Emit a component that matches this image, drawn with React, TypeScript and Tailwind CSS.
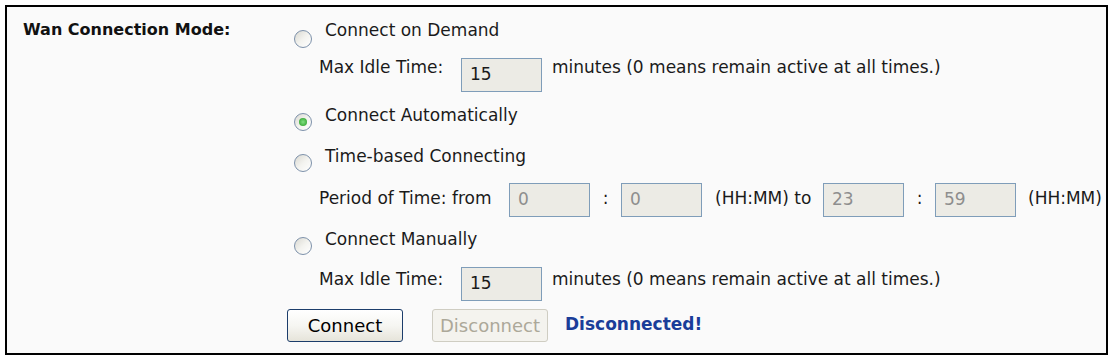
import React from "react";

function Radio({ checked = false, className = "" }: { checked?: boolean; className?: string }) {
  return (
    <span
      className={`flex h-[18px] w-[18px] shrink-0 items-center justify-center rounded-full border border-[#7d91aa] bg-linear-to-br from-[#d9d8d1] via-[#f3f3ef] to-white ${className}`}
    >
      {checked && (
        <span className="h-[8px] w-[8px] rounded-full bg-radial from-[#7fe07f] to-[#1c9a1c]" />
      )}
    </span>
  );
}

function Box({ value, disabled = false, className = "" }: { value: string; disabled?: boolean; className?: string }) {
  return (
    <span
      className={`flex h-[34px] w-[81px] shrink-0 items-center border border-[#7f9db9] bg-[#ecebe5] pl-[8px] ${
        disabled ? "text-[#8e8e8e]" : "text-[#1a1a1a]"
      } ${className}`}
    >
      {value}
    </span>
  );
}

export default function App() {
  return (
    <div className="h-[359px] w-[1112px] bg-white pl-[5px] pt-[5px] font-['DejaVu_Sans',sans-serif] text-[17px] text-[#1a1a1a]">
      <div className="flex h-[350px] w-[1103px] border-2 border-black bg-[#fafafa]">
        {/* label column */}
        <div className="w-[280px] shrink-0 pl-[16px] pt-[5px]">
          <div className="flex h-[36px] items-center text-[16px] font-bold text-[#111]">
            Wan Connection Mode:
          </div>
        </div>

        {/* options column */}
        <div className="flex flex-1 flex-col whitespace-nowrap pt-[5px]">
          <div className="flex h-[38px] items-center">
            <Radio className="ml-[7px] mt-[15px]" />
            <span className="ml-[13px]">Connect on Demand</span>
          </div>

          <div className="flex h-[36px] items-center pl-[32px]">
            <span className="w-[142px]">Max Idle Time:</span>
            <Box value="15" className="mt-[14px]" />
            <span className="ml-[10px]">minutes (0 means remain active at all times.)</span>
          </div>

          <div className="flex h-[60px] items-center">
            <Radio checked className="ml-[7px] mt-[12px]" />
            <span className="ml-[13px]">Connect Automatically</span>
          </div>

          <div className="flex h-[22px] items-center">
            <Radio className="ml-[7px] mt-[12px]" />
            <span className="ml-[13px]">Time-based Connecting</span>
          </div>

          <div className="flex h-[62px] items-center pl-[32px]">
            <span className="w-[190px]">Period of Time: from</span>
            <Box value="0" disabled className="mt-[2px]" />
            <span className="w-[31px] text-center">:</span>
            <Box value="0" disabled className="mt-[2px]" />
            <span className="w-[121px] pl-[13px]">(HH:MM) to</span>
            <Box value="23" disabled className="mt-[2px]" />
            <span className="w-[31px] text-center">:</span>
            <Box value="59" disabled className="mt-[2px]" />
            <span className="pl-[12px]">(HH:MM)</span>
          </div>

          <div className="flex h-[20px] items-center">
            <Radio className="ml-[7px] mt-[12px]" />
            <span className="ml-[13px]">Connect Manually</span>
          </div>

          <div className="flex h-[60px] items-center pl-[32px]">
            <span className="w-[142px]">Max Idle Time:</span>
            <Box value="15" className="mt-[8px]" />
            <span className="ml-[10px]">minutes (0 means remain active at all times.)</span>
          </div>

          <div className="flex h-[30px] items-center">
            <button className="flex h-[33px] w-[116px] items-center justify-center rounded-[3px] border border-[#1c3d6b] bg-linear-to-b from-white via-[#f6f6f2] to-[#e6e4da] text-[18px] text-black">
              Connect
            </button>
            <button className="ml-[29px] flex h-[33px] w-[116px] items-center justify-center rounded-[3px] border border-[#cfcdc2] bg-[#f4f3ee] text-[18px] text-[#aca899]">
              Disconnect
            </button>
            <span className="ml-[17px] font-bold text-[#1a3d99]">Disconnected!</span>
          </div>
        </div>
      </div>
    </div>
  );
}
